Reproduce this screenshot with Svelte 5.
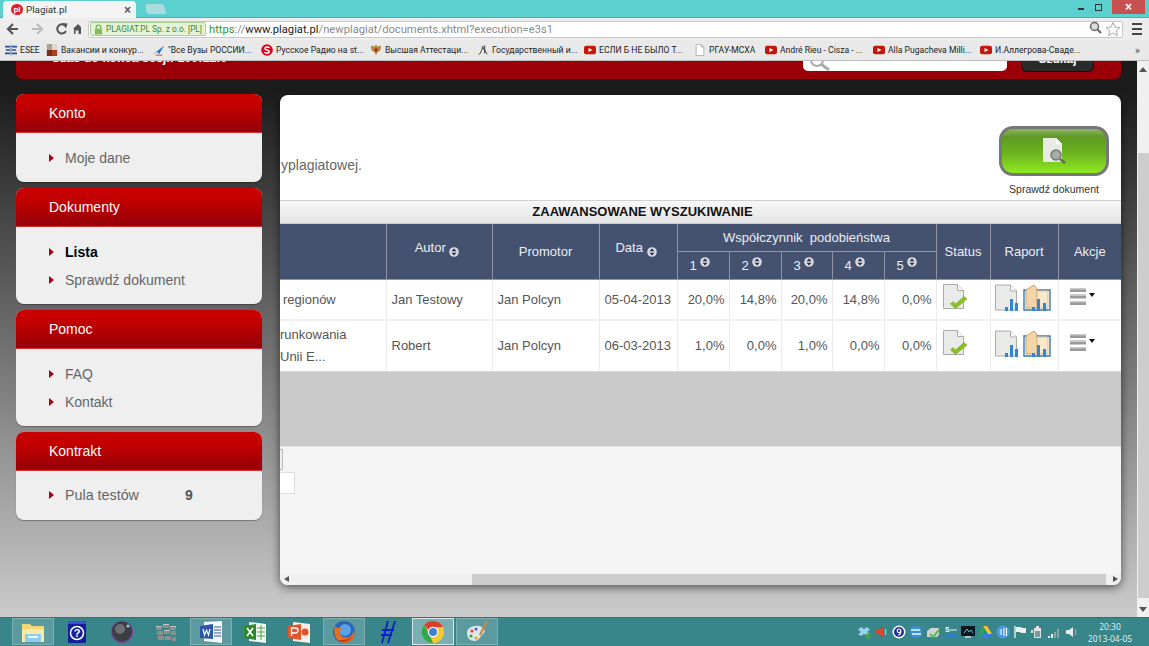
<script>
  const bookmarks = [
    { k: 'esee', t: 'ESEE', w: 41 }, { k: 'vac', t: 'Вакансии и конкур...', w: 107 },
    { k: 'air', t: '"Все Вузы РОССИИ...', w: 108 }, { k: 'radio', t: 'Русское Радио на st...', w: 109 },
    { k: 'eagle', t: 'Высшая Аттестаци...', w: 107 }, { k: 'script', t: 'Государственный и...', w: 107 },
    { k: 'yt', t: 'ЕСЛИ Б НЕ БЫЛО Т...', w: 110 }, { k: 'doc', t: 'РГАУ-МСХА', w: 71 },
    { k: 'yt', t: 'André Rieu - Cisza - ...', w: 108 }, { k: 'yt', t: 'Alla Pugacheva Milli...', w: 107 },
    { k: 'yt', t: 'И.Аллегрова-Сваде...', w: 150 }
  ];
  const menus = [
    { title: 'Konto', items: [{ t: 'Moje dane' }] },
    { title: 'Dokumenty', items: [{ t: 'Lista', active: true }, { t: 'Sprawdź dokument' }] },
    { title: 'Pomoc', items: [{ t: 'FAQ' }, { t: 'Kontakt' }] },
    { title: 'Kontrakt', compact: true, items: [{ t: 'Pula testów', count: 9 }] }
  ];
  const rows = [
    { lines: ['regionów'], inset: true, a: 'Jan Testowy', p: 'Jan Polcyn', d: '05-04-2013', v: ['20,0%', '14,8%', '20,0%', '14,8%', '0,0%'] },
    { lines: ['runkowania', 'Unii E...'], a: 'Robert', p: 'Jan Polcyn', d: '06-03-2013', v: ['1,0%', '0,0%', '1,0%', '0,0%', '0,0%'] }
  ];
  const tasks = ['folder', 'help', 'ball', 'wall', 'word', 'excel', 'ppt', 'fox', 'h', 'chrome', 'paint'];
  const lit = { folder: 1, word: 1, fox: 1, chrome: 2, paint: 1 };
  const tray = ['drop', 'spk', 'nine', 'sync', 'print', 's', 'mon', 'drive', 'e', 'flag', 'bat', 'net', 'vol'];
</script>

{#snippet sort()}
  <svg class="sort" viewBox="0 0 10 10"><circle cx="5" cy="5" r="4.800" fill="#d8dbe2"/><path d="M5 1.500 7.500 4.300H2.500ZM5 8.500 2.500 5.700H7.500Z" fill="#262c3a"/></svg>
{/snippet}

{#snippet fav(k)}
  <svg class="fav" viewBox="0 0 14 14">
    {#if k === 'esee'}<path d="M0 2h6v2H0zM8 2h6v2H8zM1 6h5v2H1zM8 6h5v2H8zM0 10h6v2H0zM8 10h6v2H8z" fill="#2d4f8e"/><path d="M6 1h2v12H6z" fill="#8aa3cc"/>
    {:else if k === 'vac'}<path d="M1 0h6v7H1z" fill="#a9a19c"/><path d="M7 0h6v7H7z" fill="#ddd5cf"/><path d="M1 7h6v7H1z" fill="#7c2e14"/><path d="M7 7h6v7H7z" fill="#a8421e"/>
    {:else if k === 'air'}<path d="M0 12 13 2 7 12 5 9Z" fill="#2a74c8"/><path d="M3 13h8" stroke="#c33" stroke-width="1"/>
    {:else if k === 'radio'}<circle cx="7" cy="7" r="6.800" fill="#e3001b"/><path d="M10 4.400C8 2.800 4.500 3.300 4.600 5.400 4.800 7.600 9.600 6.600 9.600 9 9.600 11 5.800 11.200 4 9.600" fill="none" stroke="#fff" stroke-width="1.800"/>
    {:else if k === 'eagle'}<path d="M7 1 9 3 13 2 12 8 9 9 7 13 5 9 2 8 1 2 5 3Z" fill="#b08a3c"/><path d="M5.500 5h3v4h-3z" fill="#b22"/>
    {:else if k === 'script'}<path d="M2 12C5 12 6 3 8 2M6 3 12 12M9 2 9 11" fill="none" stroke="#222" stroke-width="1"/>
    {:else if k === 'yt'}<rect x="0" y="2" width="14" height="10" rx="2.500" fill="#c4170c"/><path d="M5.300 4.600 9.800 7 5.300 9.400Z" fill="#fff"/>
    {:else}<path d="M2.500.5h6l3 3v10h-9z" fill="#fff" stroke="#aaa"/><path d="M8.500.5v3h3" fill="none" stroke="#aaa"/>{/if}
  </svg>
{/snippet}

{#snippet bars()}
  <path d="M10 23h3v4h-3zM15 15h3v12h-3zM20 19h3v8h-3z" fill="#2f86d6"/>
{/snippet}

{#snippet statusIcon()}
  <svg class="ico status" viewBox="0 0 25 26">
    <path d="M.5.5h14l6 6v18H.5z" fill="#e9ebe9" stroke="#a9acaa"/><path d="M14.500.5v6h6" fill="#fdfdfd" stroke="#a9acaa"/>
    <path d="M10 17.500 12.500 20 21 12.500 24 15 12.500 24.500 7.500 20Z" fill="#8cc21e" stroke="#6d9a12" stroke-width=".5"/>
  </svg>
{/snippet}

{#snippet reportIcons()}
  <svg class="ico rep" viewBox="0 0 25 28">
    <path d="M.5 1h15l6 6v19H.5z" fill="#e9ebe9" stroke="#a9acaa"/><path d="M15.500 1v6h6" fill="#fdfdfd" stroke="#a9acaa"/>
    {@render bars()}
  </svg>
  <svg class="ico book" viewBox="0 0 28 28">
    <path d="M1 6h26v20H1Z" fill="#fff" stroke="#3a78b0" stroke-width="1.400"/>
    <path d="M3 6 11 1q3 2 3 6v17H3Z" fill="#f3d6a8" stroke="#c9a46c"/><path d="M14 7h11v17H14z" fill="#fae8cb" stroke="#dcbd8c"/>
    <path d="M9 23h3v4H9zM14 15h3v12h-3zM20 19h3v8h-3z" fill="#2f86d6"/>
  </svg>
{/snippet}

{#snippet actions()}
  <span class="acts">
    <svg class="ico list" viewBox="0 0 16 17"><path d="M0 0h16v4H0zM0 6.500h16v4H0zM0 13h16v4H0z" fill="#9a9a9a"/><path d="M0 0h16v1.500H0zM0 6.500h16V8H0zM0 13h16v1.500H0z" fill="#c9c9c9"/></svg>
    <i class="caret"></i>
  </span>
{/snippet}

{#snippet taskIcon(k)}
  <svg class="task" viewBox="0 0 24 24">
    {#if k === 'folder'}<path d="M1 4h8l2 2h12v16H1z" fill="#f3d774"/><path d="M1 9h22v13H1z" fill="#fbeaa6"/><path d="M4 14h16v8H4z" fill="#8fcbee"/><path d="M7 16h10v2H7z" fill="#e8f6ff"/>
    {:else if k === 'help'}<rect x="3" y="1" width="18" height="22" rx="1.500" fill="#14209a"/><path d="M3 1h18v3H3z" fill="#3a55c8"/><circle cx="12" cy="13" r="6.500" fill="none" stroke="#fff" stroke-width="1.500"/><text x="12" y="16.500" text-anchor="middle" class="qm">?</text>
    {:else if k === 'ball'}<circle cx="12" cy="12" r="11" fill="#7a3ea0"/><circle cx="12" cy="11.500" r="10" fill="#3c3f42"/><circle cx="10" cy="9" r="5" fill="#6c7075"/><circle cx="18" cy="6" r="1.500" fill="#a9c4de"/>
    {:else if k === 'wall'}<path d="M2 6h6v4H2zM9 4h6v4H9zM16 6h6v4h-6zM3 11h6v4H3zM10 10h6v4h-6zM17 11h5v4h-5zM4 16h6v4H4zM11 16h6v4h-6zM18 17h4v4h-4z" fill="#8d8f8c"/><path d="M2 6h6v1H2zM9 4h6v1H9zM16 6h6v1h-6zM10 10h6v1h-6z" fill="#c5c7c4"/>
    {:else if k === 'word'}<path d="M5 2 23 1v22L5 21Z" fill="#f6f8fc"/><path d="M1 6 14 4v15L1 18Z" fill="#2a58a8"/><path d="M4 9 5.500 15 7.500 10 9.500 15 11 9" fill="none" stroke="#fff" stroke-width="1.200"/><path d="M15 7h7M15 10h7M15 13h7M15 16h7" stroke="#2a58a8"/>
    {:else if k === 'excel'}<path d="M6 2 23 4v19L6 21Z" fill="#f1f8ee"/><path d="M1 6 13 4v16L1 18Z" fill="#2e8a2e"/><path d="M4 8 10 16M10 8 4 16" stroke="#fff" stroke-width="1.600"/><path d="M14 8h8M14 12h8M14 16h8M18 5v15" stroke="#4fa24f"/>
    {:else if k === 'ppt'}<path d="M6 2 23 4v19L6 21Z" fill="#fbeee8"/><path d="M1 6 14 4v16L1 18Z" fill="#e2552b"/><path d="M4.500 8h4a2.500 2.500 0 0 1 0 5h-4ZM4.500 8v8" fill="none" stroke="#fff" stroke-width="1.300"/><circle cx="18" cy="12" r="3.600" fill="#e2552b"/>
    {:else if k === 'fox'}<circle cx="12" cy="12" r="11" fill="#2a64b8"/><circle cx="13" cy="10" r="6" fill="#5aa0e6"/><path d="M3 6C1 12 3 22 12 23 20 23 24 16 22 10 21 16 16 19 11 17 7 15 7 10 10 8 6 8 4 8 3 6Z" fill="#e8701a"/><path d="M6 20C10 23 17 23 21 16 17 20 11 20 6 20Z" fill="#c93b12"/>
    {:else if k === 'h'}<path d="M12 1 6 23M19 1 12 23M6 10h12M5 15h11" fill="none" stroke="#0a1fc8" stroke-width="1.800"/>
    {:else if k === 'chrome'}<circle cx="12" cy="12" r="11" fill="#f7c92e"/><path d="M12 1A11 11 0 0 1 22 7H12A5 5 0 0 0 7.400 10L3.200 5A11 11 0 0 1 12 1Z" fill="#dd3e30"/><path d="M3.200 5 8 13.500 12 23A11 11 0 0 1 3.200 5Z" fill="#2fa84f"/><circle cx="12" cy="12" r="5.200" fill="#fff"/><circle cx="12" cy="12" r="4" fill="#3f7fd9"/>
    {:else}<path d="M2 13C2 8 8 5 14 6 20 7 21 12 18 14 15 16 15 20 10 21 5 21 2 18 2 13Z" fill="#dfe7ea"/><circle cx="7" cy="11" r="1.600" fill="#d44"/><circle cx="6" cy="16" r="1.600" fill="#3a3"/><circle cx="11" cy="9" r="1.500" fill="#36c"/><circle cx="11" cy="18" r="1.500" fill="#e9a21e"/><path d="M15 15 22 1" stroke="#c98a46" stroke-width="2.400"/>{/if}
  </svg>
{/snippet}

{#snippet trayIcon(k)}
  <svg class="trayi" viewBox="0 0 14 14">
    {#if k === 'drop'}<path d="M1 5 4 2l3 2 3-2 3 3-3 2 3 2-3 2-3-2-3 2-3-2 3-2Z" fill="#9ad0ec"/><circle cx="11" cy="11" r="2.600" fill="#3fa83f"/>
    {:else if k === 'spk'}<path d="M1 5h3l5-3v10L4 9H1z" fill="#d8452c"/><path d="M11 4q2 3 0 6" fill="none" stroke="#cfd8d8"/>
    {:else if k === 'nine'}<circle cx="7" cy="7" r="6.500" fill="#fff"/><circle cx="7" cy="7" r="5" fill="#1f2f9c"/><circle cx="7" cy="5.800" r="1.800" fill="none" stroke="#fff" stroke-width="1.200"/><path d="M8.800 6C8.800 8 8 10 6 10" fill="none" stroke="#fff" stroke-width="1.200"/>
    {:else if k === 'sync'}<circle cx="7" cy="7" r="6.500" fill="#3c8ed0"/><path d="M2 5h9M3 9h9" stroke="#dff" stroke-width="1.500"/>
    {:else if k === 'print'}<path d="M1 6 5 3h8v7l-2 2H1z" fill="#cfd4d4"/><path d="M4 9 7 12 13 5" fill="none" stroke="#52c04a" stroke-width="2"/>
    {:else if k === 's'}<text x="1" y="7" class="trayt">S</text><path d="M5 9h8v3H2v-1z" fill="#2f7fc8"/><path d="M6 5h7" stroke="#eee"/>
    {:else if k === 'mon'}<rect x="0" y="1" width="14" height="10" fill="#11161c"/><path d="M3 8 6 4l2 3 2-2 2 3" stroke="#6fb7e6" fill="none"/><path d="M4 12h6" stroke="#ddd" stroke-width="1.500"/>
    {:else if k === 'drive'}<path d="M5 1h4l5 8H10Z" fill="#f4c430"/><path d="M5 1 0 9l2 4 5-8Z" fill="#2aa455"/><path d="M4 9h10l-2 4H2Z" fill="#3a7de0"/>
    {:else if k === 'e'}<circle cx="7" cy="7" r="6.500" fill="#4a9ee0"/><path d="M5 4v6M8 3v8M10.500 3v8" stroke="#fff"/>
    {:else if k === 'flag'}<path d="M2 1v12" stroke="#eee" stroke-width="1.400"/><path d="M3 2h5l1 1h4v5H8L7 7H3z" fill="#eee"/>
    {:else if k === 'bat'}<path d="M4 3h7v10H4z" fill="#dfe5e5"/><path d="M6 1h3v2H6zM1 5h2v3H1z" fill="#dfe5e5"/><path d="M5 6h5v6H5z" fill="#7d9a9a"/>
    {:else if k === 'net'}<path d="M1 11h2v2H1zM4 9h2v4H4z" fill="#eee"/><path d="M7 7h2v6H7zM10 4h2v9h-2z" fill="#8fa5a5"/>
    {:else}<path d="M1 5h3l4-3v10L4 9H1z" fill="#e6ecec"/><path d="M10 4q2 3 0 6" fill="none" stroke="#9fb5b5"/>{/if}
  </svg>
{/snippet}

<div class="window">
  <header class="tabstrip">
    <div class="tab">
      <span class="tabfav">pl</span><span class="tabname">Plagiat.pl</span><span class="tabx">×</span>
    </div>
    <div class="newtab"></div>
    <div class="winbtns">
      <span class="wmin"></span><span class="wres"></span><span class="wclose">×</span>
    </div>
  </header>

  <div class="toolbar">
    <svg class="nav" viewBox="0 0 76 14">
      <path d="M7 2 2 7l5 5M2 7h10" fill="none" stroke="#555" stroke-width="2.200"/>
      <path d="M31 2l5 5-5 5M36 7H26" fill="none" stroke="#bbb" stroke-width="2.200"/>
      <path d="M59 3.500A4.600 4.600 0 1 0 60 9" fill="none" stroke="#555" stroke-width="2"/><path d="M56 1l5.500.5L60 6.500Z" fill="#555"/>
      <path d="M68 7l5-5 3 3V12h-2.500V8.500H70.500V12H69V7Z" fill="#555" transform="translate(-1 0)"/>
    </svg>
    <div class="omni">
      <span class="ev">
        <svg viewBox="0 0 10 12"><path d="M2.500 5V3.500a2.500 2.500 0 0 1 5 0V5" fill="none" stroke="#6aa84f" stroke-width="1.300"/><rect x="1" y="5" width="8" height="6.500" fill="#86b95a"/></svg>
        <span>PLAGIAT.PL Sp. z o.o. [PL]</span>
      </span>
      <span class="url"><b class="https">https</b><span class="dim">://</span><span class="host">www.plagiat.pl</span><span class="dim">/newplagiat/documents.xhtml?execution=e3s1</span></span>
      <svg class="omnii" viewBox="0 0 32 16">
        <circle cx="5.500" cy="5.500" r="4" fill="#ddd" stroke="#666" stroke-width="1.500"/><path d="M8.500 8.500 12 12" stroke="#666" stroke-width="2.200"/>
        <path d="M24 1.500l2 4.600 5 .4-3.800 3.300 1.200 4.900-4.400-2.700-4.400 2.700 1.200-4.900-3.800-3.300 5-.4Z" fill="#fff" stroke="#aaa"/>
      </svg>
    </div>
    <span class="burger"></span>
  </div>

  <nav class="bookmarks">
    {#each bookmarks as b}
      <span class="bm" style="width:{b.w}px">{@render fav(b.k)}<span>{b.t}</span></span>
    {/each}
    <span class="more">»</span>
  </nav>

  <div class="viewport">
    <div class="page">
      <div class="topbar">
        <strong class="session">Czas do końca sesji: 100:12:0</strong>
        <div class="search"><svg viewBox="0 0 24 12"><circle cx="10" cy="-1" r="6" fill="none" stroke="#aaa" stroke-width="2"/><path d="M14 3 22 9" stroke="#aaa" stroke-width="3"/></svg></div>
        <div class="seek"><span>Szukaj</span></div>
      </div>

      <div class="columns">
        <aside class="sidebar">
          {#each menus as m}
            <section class="card" class:compact={m.compact}>
              <h2>{m.title}</h2>
              <ul>
                {#each m.items as it}
                  <li class:active={it.active}>
                    <i class="arrow"></i><span class="label">{it.t}</span>
                    {#if it.count}<b class="count">{it.count}</b>{/if}
                  </li>
                {/each}
              </ul>
            </section>
          {/each}
        </aside>

        <main class="panel">
          <div class="intro">
            <p>yplagiatowej.</p>
            <div class="check">
              <div class="green">
                <svg viewBox="0 0 26 28"><path d="M2 1h13l6 6v18H2z" fill="#e9e9e6"/><path d="M15 1v6h6z" fill="#fff"/><circle cx="15" cy="18" r="5" fill="#a6aca6" stroke="#777" stroke-width="1.500"/><path d="M19 22 24 26" stroke="#666" stroke-width="2.500"/></svg>
              </div>
              <span>Sprawdź dokument</span>
            </div>
          </div>
          <div class="advanced">ZAAWANSOWANE WYSZUKIWANIE</div>
          <table>
            <colgroup>
              <col class="c1"/><col class="c2"/><col class="c3"/><col class="c4"/>
              <col class="n"/><col class="n"/><col class="n3"/><col class="n"/><col class="n"/>
              <col class="c5"/><col class="c6"/><col class="c7"/>
            </colgroup>
            <thead>
              <tr class="h1">
                <th rowspan="2"></th>
                <th rowspan="2"><span class="up">Autor {@render sort()}</span></th>
                <th rowspan="2">Promotor</th>
                <th rowspan="2"><span class="up">Data {@render sort()}</span></th>
                <th colspan="5" class="wide">Współczynnik&nbsp; podobieństwa</th>
                <th rowspan="2">Status</th>
                <th rowspan="2">Raport</th>
                <th rowspan="2">Akcje</th>
              </tr>
              <tr class="h2">
                {#each [1, 2, 3, 4, 5] as n}
                  <th class="num">{n} <span class="raise">{@render sort()}</span></th>
                {/each}
              </tr>
            </thead>
            <tbody>
              {#each rows as r}
                <tr>
                  <td class="name" class:inset={r.inset}>{#each r.lines as l}<div>{l}</div>{/each}</td>
                  <td>{r.a}</td><td>{r.p}</td><td>{r.d}</td>
                  {#each r.v as v}<td class="pct">{v}</td>{/each}
                  <td class="statcell">{@render statusIcon()}</td>
                  <td class="reports">{@render reportIcons()}</td>
                  <td class="actcell">{@render actions()}</td>
                </tr>
              {/each}
            </tbody>
          </table>
          <div class="graybox"></div>
          <div class="lower">
            <div class="frag1"></div>
            <div class="frag2"></div>
          </div>
          <div class="hscroll">
            <i class="la"></i>
            <div class="hthumb"></div>
            <i class="ra"></i>
          </div>
        </main>
      </div>
    </div>
    <div class="vscroll"><i class="ua"></i><div class="vthumb"></div><i class="da"></i></div>
  </div>

  <footer class="taskbar">
    <div class="tasks">
      {#each tasks as t}
        <span class="tbtn" class:on={lit[t] === 1} class:cur={lit[t] === 2}>{@render taskIcon(t)}</span>
      {/each}
    </div>
    <div class="tray">
      {#each tray as t}{@render trayIcon(t)}{/each}
      <div class="clock"><span>20:30</span><span>2013-04-05</span></div>
    </div>
  </footer>
</div>

<style>
  :global(body) { margin: 0; background: #ccc; }
  .window {
    width: 1149px; height: 646px; overflow: hidden;
    display: grid; grid-template-rows: 18px 22px 21px 556px 29px;
    font-family: "Liberation Sans", Arial, sans-serif;
  }
  .tabstrip { background: #5ccfcf; display: flex; align-items: flex-end; border-bottom: 1px solid #4eaeae; box-sizing: border-box; overflow: visible; }
  .tab {
    width: 133px; height: 17px; margin-left: 3px; box-sizing: border-box; padding: 0 5px 0 8px;
    background: #f3f3f3; border-radius: 4px 4px 0 0; display: flex; align-items: center; font: 9.800px Roboto, sans-serif; color: #333;
    margin-bottom: -1px;
  }
  .tabfav { width: 12px; height: 11px; border-radius: 6px; background: #d8232a; color: #fff; font: bold 8px/11px "Liberation Sans", sans-serif; text-align: center; margin-right: 3px; }
  .tabname { flex: 1; }
  .tabx { font: bold 12px "Liberation Sans", sans-serif; color: #555; }
  .newtab { width: 19px; height: 10px; margin: 0 0 3px 10px; background: #a9dcde; border-radius: 3px 3px 0 0; transform: skewX(12deg); }
  .winbtns { margin-left: auto; align-self: flex-start; display: flex; align-items: center; height: 14px; }
  .wmin { width: 6px; height: 2px; background: #333; margin-top: 4px; margin-right: 11px; }
  .wres { width: 5px; height: 5px; border: 1.500px solid #333; margin-right: 10px; }
  .wclose { width: 33px; height: 14px; background: #c75050; color: #fff; text-align: center; font: bold 12px/14px "Liberation Sans", sans-serif; margin-right: 4px; }

  .toolbar { background: #ededed; display: flex; align-items: center; padding: 0 4px 0 6px; }
  .nav { width: 76px; height: 14px; flex: none; }
  .omni {
    margin-left: 6px; flex: none; width: 1035px; height: 17px; box-sizing: border-box; background: #fff; border: 1px solid #c9c9c9; border-radius: 2px;
    display: flex; align-items: center; padding-left: 1px;
  }
  .ev {
    height: 14px; width: 116px; flex: none; box-sizing: border-box; background: #e3f3d8; border: 1px solid #a9cf92; border-radius: 2px; color: #3c8a2c;
    font: 8.300px/12px Roboto, sans-serif; white-space: nowrap; display: flex; align-items: center; gap: 3px; padding-left: 3px; overflow: hidden;
  }
  .ev svg { width: 9px; height: 11px; flex: none; }
  .url { font: 11.200px Roboto, sans-serif; margin-left: 3px; white-space: nowrap; }
  .https { font-weight: 400; color: #2c9a2c; }
  .dim { color: #8a8a8a; }
  .host { color: #222; }
  .omnii { width: 32px; height: 16px; margin-left: auto; margin-right: 1px; }
  .burger { width: 10px; height: 8px; margin-left: 9px; border-top: 2px solid #444; border-bottom: 2px solid #444; background: linear-gradient(#444, #444) center / 100% 2px no-repeat; }

  .bookmarks { background: #e9e9e9; border-bottom: 1px solid #bdbdbd; box-sizing: border-box; display: flex; align-items: center; padding-left: 5px; font: 8.600px Roboto, "Noto Sans", sans-serif; color: #222; }
  .bm { display: flex; align-items: center; gap: 3px; white-space: nowrap; flex: none; overflow: hidden; }
  .fav { width: 12px; height: 12px; flex: none; }
  .more { margin-left: auto; margin-right: 9px; font-size: 11px; color: #555; }

  .viewport { display: flex; min-height: 0; overflow: hidden; }
  .page { flex: 1; padding: 0 16px 0 16px; background: linear-gradient(#191919 0, #1c1c1c 30px, #cbcbcb 100%); min-width: 0; }
  .topbar { height: 18px; background: #9b0008; border-radius: 0 0 6px 6px; display: flex; overflow: hidden; }
  .session { color: #fff; font-size: 12.500px; line-height: 14px; margin: -10px 0 0 35px; width: 752px; flex: none; white-space: nowrap; }
  .search { width: 204px; height: 10px; background: #fff; border-radius: 0 0 5px 5px; flex: none; }
  .search svg { width: 24px; height: 12px; margin-left: 4px; display: block; }
  .seek { width: 73px; height: 11px; margin-left: 14px; background: #2b2b2b; border: 1px solid #111; border-top: 0; box-sizing: border-box; border-radius: 0 0 6px 6px; color: #fff; font: bold 12px/12px "Liberation Sans", sans-serif; text-align: center; overflow: hidden; }
  .seek span { display: block; margin-top: -8px; }

  .columns { display: flex; gap: 18px; margin-top: 15px; align-items: flex-start; }
  .sidebar { width: 246px; flex: none; display: flex; flex-direction: column; gap: 6px; }
  .card { background: #efefef; border-radius: 8px; overflow: hidden; box-shadow: 0 1px 1px rgba(0,0,0,.3); }
  .card h2 { margin: 0; height: 38px; border-bottom: 1px solid #d33; background: linear-gradient(#c90000 0, #c40000 30%, #94000a 100%); color: #fff; font-size: 14px; font-weight: 400; line-height: 38px; padding-left: 33px; }
  .card ul { list-style: none; margin: 0; padding: 11px 0 10px; }
  .card.compact ul { padding: 10px 0 11px; }
  .card li { height: 28px; display: flex; align-items: center; padding-left: 33px; color: #666; font-size: 14px; }
  .card li.active .label { color: #000; font-weight: 700; }
  .arrow { width: 0; height: 0; border-left: 5px solid #a80010; border-top: 4px solid transparent; border-bottom: 4px solid transparent; margin-right: 11px; }
  .compact .label { font-size: 14.300px; }
  .count { margin-left: 46px; color: #555; font-size: 14px; }

  .panel { width: 841px; height: 490px; margin-top: 1px; flex: none; background: #fff; border-radius: 8px; overflow: hidden; box-shadow: 0 2px 10px rgba(0,0,0,.6); display: flex; flex-direction: column; }
  .intro { height: 105px; flex: none; display: flex; justify-content: space-between; box-sizing: border-box; padding: 31px 12px 0 1px; }
  .intro p { margin: 31px 0 0; color: #666; font-size: 14px; line-height: 16px; }
  .check { width: 110px; display: flex; flex-direction: column; align-items: center; gap: 7px; font-size: 10.500px; color: #333; white-space: nowrap; }
  .green { width: 110px; height: 50px; box-sizing: border-box; border: 3px solid #777; border-radius: 14px; background: linear-gradient(#8fb36a 0, #5e9a22 18%, #6cb31f 55%, #8eea1f 100%); display: flex; align-items: center; justify-content: center; }
  .green svg { width: 26px; height: 28px; }
  .advanced { height: 24px; flex: none; box-sizing: border-box; border-top: 1px solid #cfcfcf; border-bottom: 1px solid #ccc; background: linear-gradient(#f8f8f8, #e4e4e4); padding-right: 116px; text-align: center; font: bold 13px/22px "Liberation Sans", sans-serif; color: #111; }
  table { border-collapse: collapse; table-layout: fixed; width: 841px; font-size: 13px; flex: none; }
  .c1 { width: 106px; } .c2 { width: 106px; } .c3 { width: 107px; } .c4 { width: 78px; }
  .n { width: 52px; } .n3 { width: 51px; } .c5 { width: 54px; } .c6 { width: 68px; } .c7 { width: 63px; }
  th { background: #44516f; color: #eceef3; font-weight: 400; border: 1px solid #8e95a6; border-top: 0; font-size: 13px; padding: 0; }
  th:first-child { border-left: 0; } th:last-child { border-right: 0; }
  tr.h1 th { height: 27px; }
  tr.h2 th { height: 27px; }
  .up { position: relative; top: -3px; }
  .up .sort { margin-right: 4px; vertical-align: -5px; }
  .sort { width: 10px; height: 10px; vertical-align: -2px; }
  .num { text-align: left; padding-left: 12px; font-size: 13px; }
  .raise { position: relative; top: -5px; }
  td { border: 1px solid #ececec; border-top-width: 2px; border-top-color: #f1f1f1; padding: 0 5px; color: #555; white-space: nowrap; height: 37px; background: #fff; }
  td:first-child { border-left: 0; } td:last-child { border-right: 0; }
  tbody tr:first-child td { border-top: 0; height: 39px; }
  tbody tr:last-child td { height: 49px; padding-bottom: 1px; border-bottom: 1px solid #d9d9d9; }
  .name { padding: 0; line-height: 22px; overflow: hidden; }
  .name.inset { padding-left: 3px; }
  .pct { text-align: right; padding: 0 4px 0 0; }
  .ico { display: inline-block; vertical-align: middle; }
  .status { width: 25px; height: 26px; margin: 0 0 5px 1px; }
  .statcell { padding: 0 0 0 5px; }
  .rep { width: 25px; height: 28px; margin-bottom: 4px; }
  .book { width: 28px; height: 28px; margin: 0 0 4px 3px; }
  .reports { padding: 0 0 0 4px; }
  .actcell { padding-left: 11px; }
  .acts { display: inline-flex; align-items: center; gap: 3px; margin-top: -4px; }
  .list { width: 16px; height: 17px; }
  .caret { width: 0; height: 0; border-top: 4px solid #111; border-left: 3px solid transparent; border-right: 3px solid transparent; margin-top: -3px; }
  .graybox { height: 74px; flex: none; background: #c9c9c9; border-bottom: 1px solid #e2e2e2; }
  .lower { flex: 1; background: #f5f5f5; min-height: 0; padding-top: 2px; }
  .frag1 { width: 2px; height: 19px; border: 1px solid #bbb; border-left: 0; background: #eee; }
  .frag2 { width: 14px; height: 20px; border: 1px solid #ddd; border-left: 0; background: #fff; margin-top: 2px; }
  .hscroll { height: 12px; flex: none; background: #f0f0f0; display: flex; align-items: center; }
  .la { border-right: 5px solid #555; border-top: 3px solid transparent; border-bottom: 3px solid transparent; margin: 0 183px 0 4px; }
  .hthumb { width: 634px; height: 11px; background: #cdcdcd; }
  .ra { border-left: 5px solid #555; border-top: 3px solid transparent; border-bottom: 3px solid transparent; margin-left: 7px; }

  .vscroll { width: 12px; flex: none; background: #f0f0f0; display: flex; flex-direction: column; align-items: center; }
  .ua { border-bottom: 5px solid #555; border-left: 4px solid transparent; border-right: 4px solid transparent; margin-top: 6px; }
  .vthumb { width: 11px; height: 445px; background: #cdcdcd; margin-top: 81px; }
  .da { border-top: 5px solid #555; border-left: 4px solid transparent; border-right: 4px solid transparent; margin-top: 9px; }

  .taskbar { background: #38858a; border-top: 1px solid #2f7377; box-sizing: border-box; display: flex; justify-content: space-between; }
  .tasks { display: flex; padding-left: 12px; gap: 2.400px; align-items: flex-start; }
  .tbtn { width: 42px; height: 27px; display: flex; align-items: center; justify-content: center; box-sizing: border-box; border: 1px solid transparent; }
  .tbtn.on { background: rgba(255,255,255,.18); border-color: rgba(255,255,255,.2); }
  .tbtn.cur { background: rgba(255,255,255,.34); border-color: rgba(255,255,255,.7); }
  .task { width: 24px; height: 24px; }
  .qm { font: bold 11px "Liberation Sans", sans-serif; fill: #fff; }
  .tray { display: flex; align-items: center; gap: 3.300px; padding-right: 8px; }
  .trayi { width: 14px; height: 14px; }
  .trayt { font: bold 7px "Liberation Sans", sans-serif; fill: #fff; }
  .clock { display: flex; flex-direction: column; align-items: center; margin-left: -3px; padding-top: 1px; width: 62px; font: 8.500px/12px "Open Sans", sans-serif; color: #e6f0f0; }
</style>
